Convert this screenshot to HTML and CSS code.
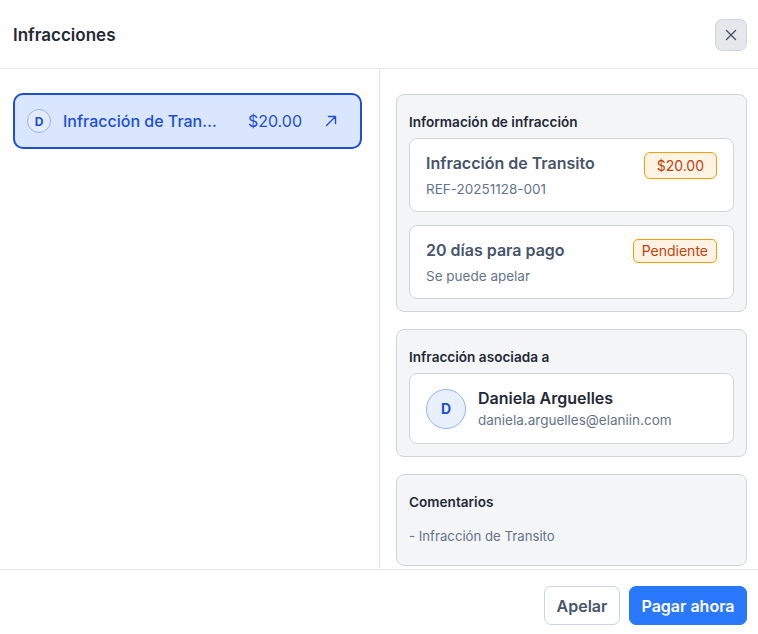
FILE: index.html
```html
<!DOCTYPE html>
<html lang="es">
<head>
    <meta charset="UTF-8">
    <meta name="viewport" content="width=device-width, initial-scale=1.0">
    <title>Infracciones</title>
    <link rel="stylesheet" href="styles.css">
</head>
<body>
<div class="modal">
    <div class="modal-header">
        <h1>Infracciones</h1>
        <button class="close-btn" aria-label="Cerrar">
            <svg width="14" height="14" viewBox="0 0 14 14" fill="none" stroke="#475569" stroke-width="1.4" stroke-linecap="round">
                <path d="M2.5 2.5l9 9M11.5 2.5l-9 9"/>
            </svg>
        </button>
    </div>

    <div class="modal-body">
        <div class="list-panel">
            <div class="list-item active">
                <span class="avatar-sm">D</span>
                <span class="item-name">Infracción de Transito</span>
                <span class="item-amount">$20.00</span>
                <svg class="item-arrow" width="16" height="16" viewBox="0 0 16 16" fill="none" stroke="#1d4ed8" stroke-width="1.4" stroke-linecap="round" stroke-linejoin="round">
                    <path d="M3.5 12.5l9-9M5.5 3.5h7v7"/>
                </svg>
            </div>
        </div>

        <div class="detail-panel">
            <div class="section">
                <div class="section-title">Información de infracción</div>
                <div class="info-card">
                    <div class="info-text">
                        <div class="info-title">Infracción de Transito</div>
                        <div class="info-sub">REF-20251128-001</div>
                    </div>
                    <span class="badge badge-amount">$20.00</span>
                </div>
                <div class="info-card">
                    <div class="info-text">
                        <div class="info-title">20 días para pago</div>
                        <div class="info-sub">Se puede apelar</div>
                    </div>
                    <span class="badge">Pendiente</span>
                </div>
            </div>

            <div class="section">
                <div class="section-title">Infracción asociada a</div>
                <div class="info-card user-card">
                    <span class="avatar-lg">D</span>
                    <div class="info-text">
                        <div class="user-name">Daniela Arguelles</div>
                        <div class="user-email">daniela.arguelles@elaniin.com</div>
                    </div>
                </div>
            </div>

            <div class="section comments">
                <div class="section-title">Comentarios</div>
                <div class="comment">- Infracción de Transito</div>
            </div>
        </div>
    </div>

    <div class="modal-footer">
        <button class="btn btn-outline">Apelar</button>
        <button class="btn btn-primary">Pagar ahora</button>
    </div>
</div>
</body>
</html>
```

FILE: styles.css
```css
:root {
    --border: #e5e7eb;
    --card-border: #d1d5db;
    --text: #1f2937;
    --text-muted: #64748b;
    --title-muted: #475569;
    --primary: #2a78fb;
    --blue: #1d4ed8;
}

* {
    margin: 0;
    padding: 0;
    box-sizing: border-box;
    font-family: Inter, 'Noto Sans', sans-serif;
}

body {
    background: #fff;
    color: var(--text);
}

.modal {
    width: 758px;
    height: 634px;
    display: flex;
    flex-direction: column;
}

.modal-header {
    height: 69px;
    flex-shrink: 0;
    display: flex;
    align-items: center;
    justify-content: space-between;
    padding: 1px 11px 0 13px;
    border-bottom: 1px solid var(--border);
}

.modal-header h1 {
    font-size: 17px;
    font-weight: 600;
    color: var(--text);
}

.close-btn {
    width: 32px;
    height: 32px;
    border: 1px solid #cbd5e1;
    border-radius: 7px;
    background: #e5e7eb;
    display: flex;
    align-items: center;
    justify-content: center;
}

.modal-body {
    height: 501px;
    flex-shrink: 0;
    display: flex;
    border-bottom: 1px solid var(--border);
}

.list-panel {
    width: 380px;
    border-right: 1px solid var(--border);
    padding: 24px 17px 0 13px;
}

.list-item {
    height: 56px;
    display: flex;
    align-items: center;
    padding: 0 21px 0 12px;
    border: 2px solid var(--blue);
    border-radius: 10px;
    background: #d9e6fd;
    color: var(--blue);
}

.avatar-sm {
    width: 24px;
    height: 24px;
    border-radius: 50%;
    border: 1px solid #93b4f8;
    background: #e3ecfd;
    font-size: 12px;
    font-weight: 700;
    display: flex;
    align-items: center;
    justify-content: center;
    flex-shrink: 0;
}

.item-name {
    width: 160px;
    margin-left: 12px;
    font-size: 16px;
    font-weight: 500;
    white-space: nowrap;
    overflow: hidden;
    text-overflow: ellipsis;
}

.item-amount {
    margin-left: auto;
    font-size: 16px;
}

.item-arrow {
    margin-left: 21px;
}

.detail-panel {
    flex: 1;
    padding: 25px 11px 0 16px;
    display: flex;
    flex-direction: column;
    gap: 17px;
}

.section {
    background: #f4f5f7;
    border: 1px solid var(--card-border);
    border-radius: 8px;
    padding: 19px 12px 12px;
}

.section-title {
    font-size: 13.6px;
    font-weight: 600;
    color: var(--text);
    line-height: 16px;
    margin-bottom: 8px;
}

.info-card {
    background: #fff;
    border: 1px solid var(--card-border);
    border-radius: 8px;
    padding: 14px 16px 13px;
    display: flex;
    justify-content: space-between;
    align-items: flex-start;
}

.info-card + .info-card {
    margin-top: 13px;
}

.info-title {
    font-size: 16px;
    font-weight: 600;
    color: var(--title-muted);
    line-height: 20px;
}

.info-sub {
    font-size: 13.5px;
    color: var(--text-muted);
    margin-top: 7px;
    line-height: 18px;
}

.badge {
    margin-top: -1px;
    font-size: 14px;
    color: #c2410c;
    background: #fff3e4;
    border: 1px solid #f59e0b;
    border-radius: 5px;
    padding: 2px 8px;
    line-height: 18px;
}

.badge-amount {
    padding: 3px 12px 3px;
    line-height: 19px;
    border-radius: 6px;
}

.user-card {
    justify-content: flex-start;
    align-items: center;
    gap: 12px;
    padding: 14px 16px;
}

.avatar-lg {
    width: 40px;
    height: 40px;
    border-radius: 50%;
    border: 1px solid #93b4f8;
    background: #e8effd;
    color: var(--blue);
    font-size: 14px;
    font-weight: 700;
    display: flex;
    align-items: center;
    justify-content: center;
}

.user-name {
    font-size: 16px;
    font-weight: 600;
    color: var(--text);
    line-height: 20px;
}

.user-email {
    font-size: 13.5px;
    color: var(--text-muted);
    margin-top: 3px;
    line-height: 18px;
}

.comments {
    padding-bottom: 20px;
}

.comment {
    font-size: 13.2px;
    color: var(--text-muted);
    line-height: 18px;
    margin-top: 17px;
}

.modal-footer {
    flex: 1;
    display: flex;
    justify-content: flex-end;
    align-items: flex-start;
    gap: 9px;
    padding: 16px 11px 0 0;
}

.btn {
    height: 39px;
    border-radius: 7px;
    font-size: 16px;
    font-weight: 600;
    cursor: pointer;
}

.btn-outline {
    width: 76px;
    background: #fff;
    border: 1px solid #cbd5e1;
    color: var(--title-muted);
}

.btn-primary {
    width: 118px;
    background: var(--primary);
    border: 1px solid var(--primary);
    color: #fff;
}
```
